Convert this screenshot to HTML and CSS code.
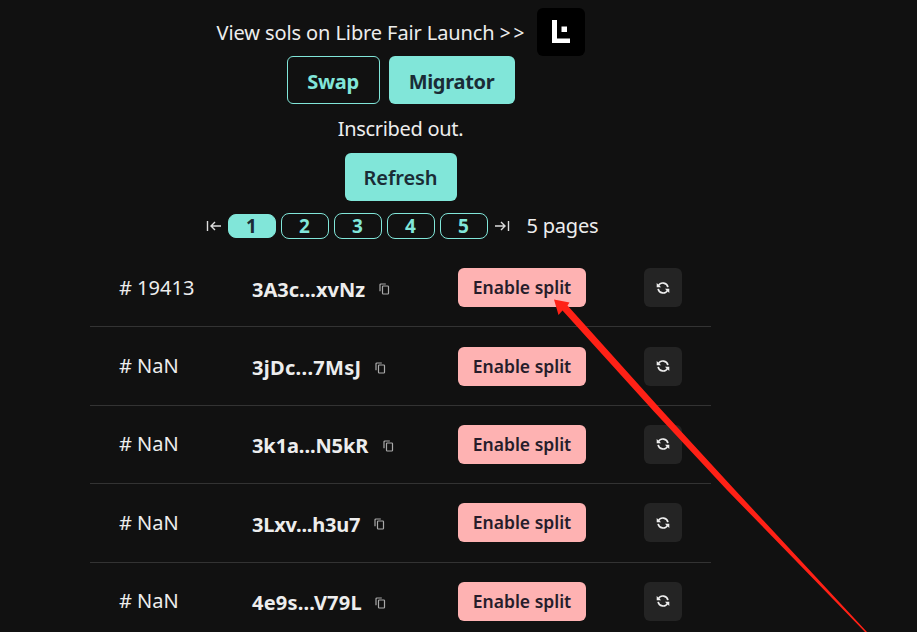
FILE: index.html
```html
<!DOCTYPE html>
<html lang="en">
<head>
<meta charset="utf-8">
<title>Sols</title>
<link rel="stylesheet" href="styles.css">
</head>
<body>
<svg class="defs" aria-hidden="true">
  <symbol id="copy" viewBox="0 0 11 12"><path d="M1 8.200V2Q1 1 2 1H6.800M3.500 3.800Q3.500 3 4.300 3H8.700Q9.500 3 9.500 3.800V10.200Q9.500 11 8.700 11H4.300Q3.500 11 3.500 10.200Z"/></symbol>
  <symbol id="sync" viewBox="0 0 16 16"><path d="M2.800 5.400A5.800 5.800 0 0 1 13.600 7M13.200 10.600A5.800 5.800 0 0 1 2.400 9"/><path d="M.8 2.200V7.200H5.800ZM15.200 13.800V8.800H10.200Z" class="solid"/></symbol>
</svg>
<main class="page">
  <header class="launch">
    <span class="launch-text">View sols on Libre Fair Launch <span class="chevrons">&gt;&gt;</span></span>
    <svg class="logo" viewBox="0 0 48 48"><path d="M15 12h5v18.500h13V35H15zM24.500 18.500h5.500v5.500h-5.500z"/></svg>
  </header>
  <div class="actions">
    <button class="btn outline swap">Swap</button>
    <button class="btn migrator">Migrator</button>
  </div>
  <p class="status"><span>Inscribed out.</span></p>
  <button class="btn refresh">Refresh</button>
  <nav class="pager">
    <svg class="jump" viewBox="0 0 16 14"><path d="M1.500 2V12M15 7H5M9 3L5 7L9 11"/></svg>
    <button class="num active">1</button>
    <button class="num">2</button>
    <button class="num">3</button>
    <button class="num">4</button>
    <button class="num">5</button>
    <svg class="jump last" viewBox="0 0 16 14"><path d="M14.500 2V12M1 7H11M7 3L11 7L7 11"/></svg>
    <span class="total">5 pages</span>
  </nav>
  <section class="list">
    <div class="row"><span class="id"># 19413</span><div class="addr"><b class="a1">3A3c...xvNz</b><svg class="copy"><use href="#copy"/></svg></div><button class="split">Enable split</button><button class="sync"><svg><use href="#sync"/></svg></button></div>
    <div class="row"><span class="id"># NaN</span><div class="addr"><b class="a2">3jDc...7MsJ</b><svg class="copy"><use href="#copy"/></svg></div><button class="split">Enable split</button><button class="sync"><svg><use href="#sync"/></svg></button></div>
    <div class="row"><span class="id"># NaN</span><div class="addr"><b class="a3">3k1a...N5kR</b><svg class="copy"><use href="#copy"/></svg></div><button class="split">Enable split</button><button class="sync"><svg><use href="#sync"/></svg></button></div>
    <div class="row"><span class="id"># NaN</span><div class="addr"><b class="a4">3Lxv...h3u7</b><svg class="copy"><use href="#copy"/></svg></div><button class="split">Enable split</button><button class="sync"><svg><use href="#sync"/></svg></button></div>
    <div class="row"><span class="id"># NaN</span><div class="addr"><b class="a5">4e9s...V79L</b><svg class="copy"><use href="#copy"/></svg></div><button class="split">Enable split</button><button class="sync"><svg><use href="#sync"/></svg></button></div>
  </section>
</main>
<svg class="arrow" viewBox="0 0 917 632"><path d="M554 299.500L569.500 302.500L567.500 305.500L661 409.500L735 490L867 632H865L727 490L653.500 411L562.500 310.500L558.500 315Z"/></svg>
</body>
</html>
```
FILE: styles.css
```css
* { box-sizing: border-box; }
body { margin: 0; background: #111; color: #ededed; font: 20px/28px "Noto Sans", "Open Sans", sans-serif; height: 632px; overflow: hidden; }
button { font: inherit; border: 0; padding: 0; margin: 0; white-space: nowrap; }
.defs { position: absolute; width: 0; height: 0; }
.page { width: 621px; margin-left: 90px; padding-top: 8px; display: flex; flex-direction: column; align-items: center; }
.launch { display: flex; align-items: center; height: 48px; }
.launch-text { width: 320px; white-space: nowrap; letter-spacing: -0.1px; padding-top: 1px; }
.chevrons { font-size: 19px; letter-spacing: 3px; }
.logo { width: 48px; height: 48px; background: #000; border-radius: 6px; fill: #fff; }
.actions { display: flex; gap: 9px; }
.btn { height: 48px; border-radius: 6px; background: #81e6d9; color: #1a2c36; font-weight: 700; font-size: 20px; letter-spacing: -0.3px; padding-top: 3px; }
.outline { background: transparent; border: 1px solid #81e6d9; color: #81e6d9; }
.swap { width: 93px; }
.migrator { width: 126px; }
.status { margin: 0; height: 49px; display: flex; align-items: center; letter-spacing: -0.3px; }
.refresh { width: 112px; font-weight: 600; letter-spacing: -0.1px; padding-top: 1px; }
.pager { display: flex; align-items: center; margin-top: 12px; height: 26px; width: 394px; gap: 5px; padding-left: 1px; }
.jump { width: 16px; height: 14px; fill: none; stroke: #ddd; stroke-width: 1.4; flex: none; margin-left: 1px; margin-right: 1px; }
.num { width: 48px; height: 26px; border: 1px solid #81e6d9; border-radius: 8px; background: transparent; color: #81e6d9; font-weight: 700; font-size: 19px; line-height: 24px; flex: none; }
.active { background: #81e6d9; color: #1a2c36; height: 24px; line-height: 22px; }
.total { white-space: nowrap; margin-left: 11px; letter-spacing: -0.2px; }
.list { width: 621px; margin-top: 10px; }
.row { height: 78.4px; display: grid; grid-template-columns: 133px 206px 186px 38px; padding-left: 29px; align-items: center; border-bottom: 1px solid #333; }
.addr { display: flex; align-items: center; gap: 14px; padding-top: 4px; }
.addr b { font-weight: 700; white-space: nowrap; }
.a1 { width: 113px; }
.a2 { width: 109px; letter-spacing: 0.3px; }
.a3 { width: 117px; letter-spacing: -0.1px; }
.a4 { width: 108px; letter-spacing: -0.2px; }
.a5 { width: 109px; letter-spacing: 0.2px; }
.copy { width: 11px; height: 12px; fill: none; stroke: #aaa; stroke-width: 1.2; margin-top: -1px; }
.split { width: 128px; height: 39px; border-radius: 6px; background: #feb2b2; color: #261d2b; font-weight: 600; font-size: 17.5px; padding-bottom: 1px; }
.sync { width: 38px; height: 39px; border-radius: 6px; background: #242424; display: grid; place-items: center; }
.sync svg { width: 14px; height: 14px; fill: none; stroke: #eee; stroke-width: 1.9; }
.solid { fill: #eee; stroke: none; }
.arrow { position: absolute; left: 0; top: 0; width: 917px; height: 632px; fill: #ff2116; pointer-events: none; }
```
